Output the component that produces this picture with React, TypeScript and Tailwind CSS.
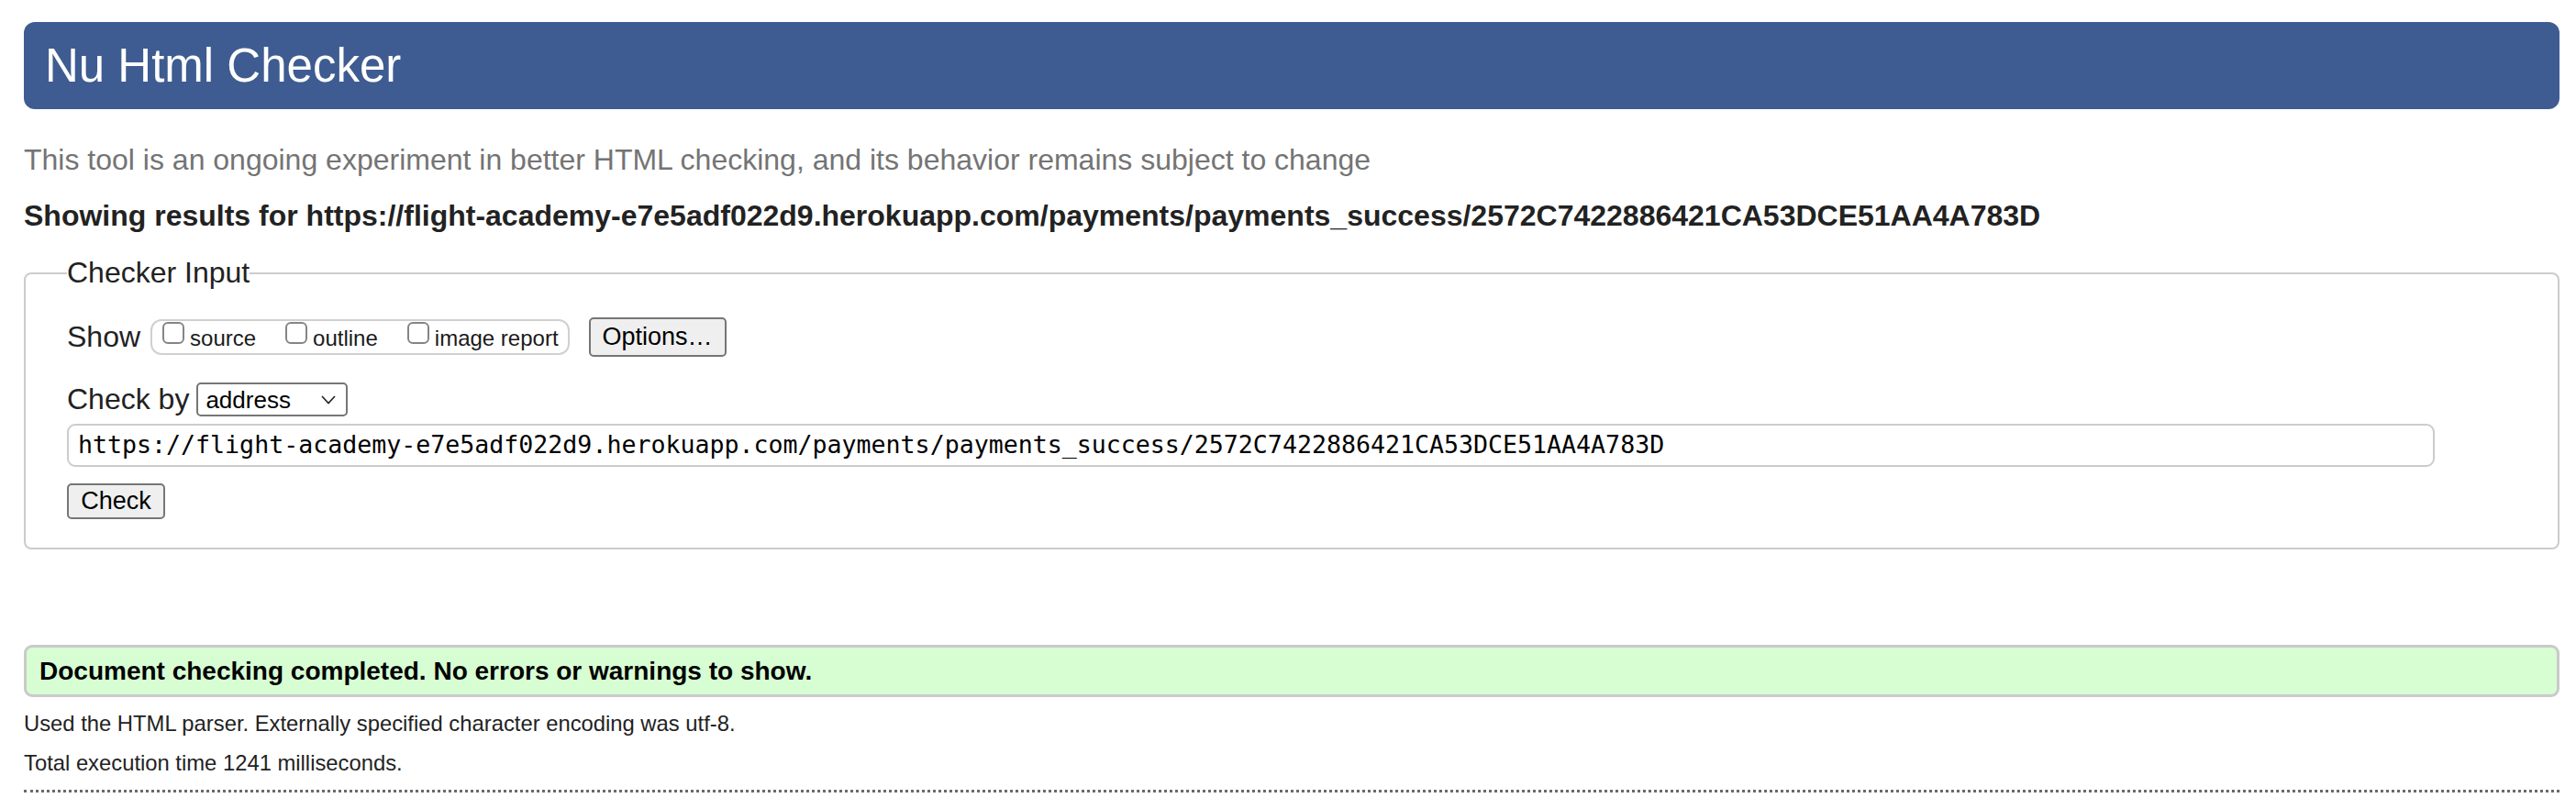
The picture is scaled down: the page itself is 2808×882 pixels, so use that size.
import React from "react";

const sans = "font-['Liberation_Sans',Arial,Helvetica,sans-serif]";

function Check({ label }: { label: string }) {
  return (
    <label className="flex items-start">
      <input
        type="checkbox"
        className="appearance-none w-[24px] h-[24px] mt-[1px] border-[2px] border-[#858585] rounded-[6px] bg-white shrink-0"
      />
      <span className="ml-[6px] mt-[5px] text-[24px] leading-[28px] text-[#1a1a1a]">{label}</span>
    </label>
  );
}

export default function App() {
  return (
    <div className={`${sans} bg-white min-h-[882px] pl-[26px] pr-[18px] pt-[24px] text-[#222]`}>
      <header className="h-[95px] rounded-[12px] bg-[#3e5c91] flex items-center pl-[23px]">
        <h1 className="text-white text-[51px] leading-none font-normal">Nu Html Checker</h1>
      </header>

      <p className="mt-[37px] text-[32px] leading-[37px] text-[#747474]">
        This tool is an ongoing experiment in better HTML checking, and its behavior remains subject to change
      </p>

      <p className="mt-[24px] text-[32px] leading-[37px] font-bold text-[#222]">
        Showing results for https://flight-academy-e7e5adf022d9.herokuapp.com/payments/payments_success/2572C7422886421CA53DCE51AA4A783D
      </p>

      <fieldset className="mt-[25px] border-2 border-[#cccccc] rounded-[8px] pl-[45px] pr-[134px] pt-[30px] pb-[31px]">
        <legend className="text-[32px] leading-[37px] text-[#222] px-0">Checker Input</legend>

        <div className="flex items-center h-[43px]">
          <span className="text-[32px] leading-[37px]">Show</span>
          <div className="ml-[11px] h-[39px] border-2 border-[#d0d0d0] rounded-[12px] flex items-start gap-[32px] pl-[11px] pr-[10px] pt-0">
            <Check label="source" />
            <Check label="outline" />
            <Check label="image report" />
          </div>
          <button className="ml-[21px] h-[43px] w-[150px] bg-[#efefef] border-[2px] border-[#767676] rounded-[5px] text-[27px] leading-none text-black">
            Options…
          </button>
        </div>

        <div className="flex items-center h-[37px] mt-[28px]">
          <span className="text-[32px] leading-[37px]">Check by</span>
          <div className="ml-[8px] h-[37px] w-[165px] border-[2px] border-[#767676] rounded-[5px] bg-white flex items-center pl-[8px] pr-[7px] justify-between">
            <span className="text-[26px] leading-none text-black">address</span>
            <svg width="20" height="12" viewBox="0 0 20 12" className="mr-[2px]">
              <path d="M3 2 L10 9.5 L17 2" fill="none" stroke="#222" strokeWidth="1.6" />
            </svg>
          </div>
        </div>

        <div className="mt-[8px] h-[47px] border-2 border-[#cccccc] rounded-[9px] flex items-center pl-[10px]">
          <span className="font-['DejaVu_Sans_Mono',Menlo,monospace] text-[26.6px] leading-none text-black">
            https://flight-academy-e7e5adf022d9.herokuapp.com/payments/payments_success/2572C7422886421CA53DCE51AA4A783D
          </span>
        </div>

        <button className="mt-[18px] block h-[39px] w-[107px] bg-[#efefef] border-[2px] border-[#767676] rounded-[5px] text-[27px] leading-none text-black">
          Check
        </button>
      </fieldset>

      <div className="mt-[104px] h-[57px] bg-[#d7fdd3] border-[3px] border-[#cacaca] rounded-[9px] flex items-center pl-[14px]">
        <p className="text-[28px] leading-none font-bold text-black">
          Document checking completed. No errors or warnings to show.
        </p>
      </div>

      <p className="mt-[15px] text-[23.8px] leading-[28px] text-[#222]">
        Used the HTML parser. Externally specified character encoding was utf-8.
      </p>
      <p className="mt-[15px] text-[23.8px] leading-[28px] text-[#222]">Total execution time 1241 milliseconds.</p>

      <div className="mt-[15px] border-t-[3px] border-dotted border-[#6a6a6a]" />
    </div>
  );
}
